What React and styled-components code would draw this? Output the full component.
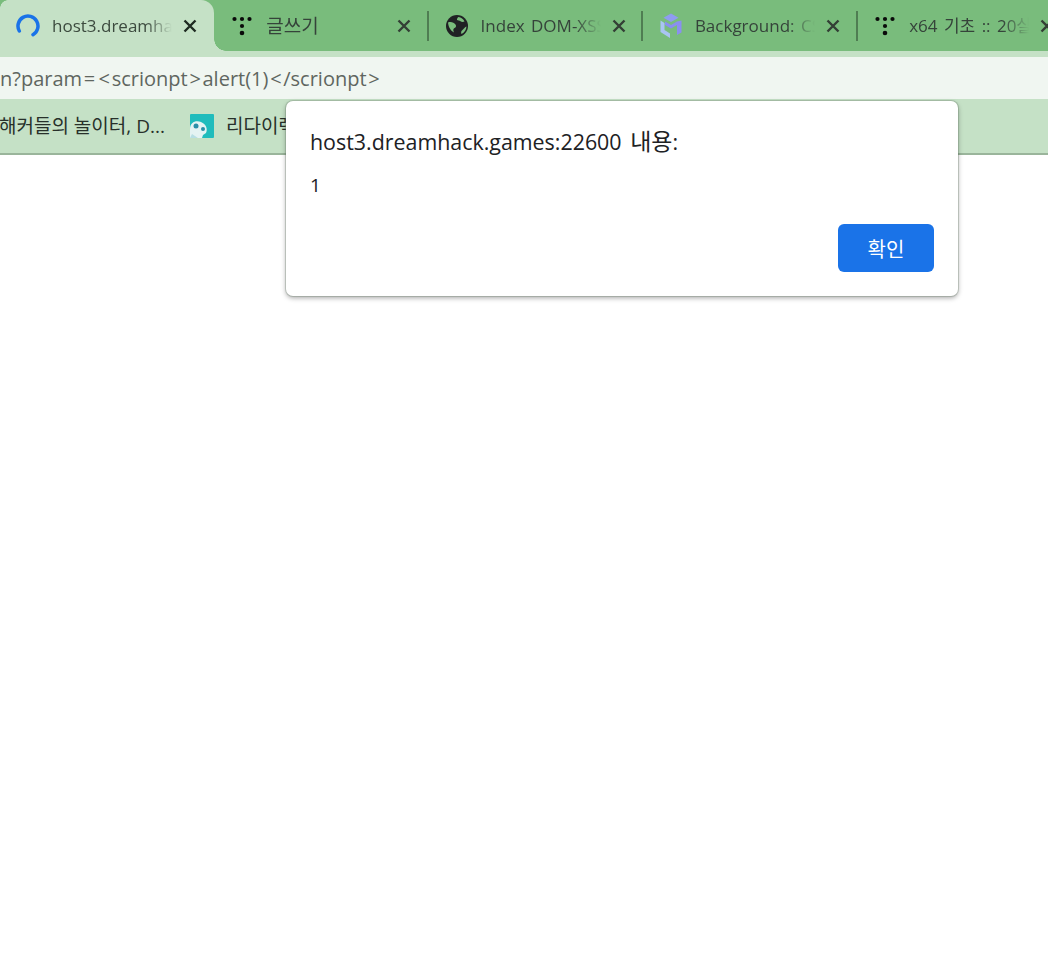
import React from "react"
import styled, { createGlobalStyle } from "styled-components"

const GlobalStyle = createGlobalStyle`
    html, body {
        margin: 0;
        padding: 0;
        background: #fff;
        overflow: hidden;
    }
    body {
        font-family: "Open Sans", "Noto Sans CJK KR", sans-serif;
    }
`;

const Page = styled.div`
    position: relative;
    width: 1048px;
    height: 964px;
    overflow: hidden;
    background: #fff;
`;

const TabStrip = styled.div`
    display: flex;
    height: 51px;
    background: #79bc7c;
`;

const Tab = styled.div`
    position: relative;
    flex: 0 0 214.3px;
    height: ${(p) => (p.$active ? "57px" : "51px")};
    display: flex;
    align-items: center;
    box-sizing: border-box;
    padding-bottom: ${(p) => (p.$active ? "6px" : "0")};
    background: ${(p) => (p.$active ? "#c5e1c6" : "transparent")};
    border-radius: ${(p) => (p.$active ? "0 13px 0 0" : "0")};
    color: ${(p) => (p.$active ? "#3c4a3e" : "#35433a")};
    z-index: ${(p) => (p.$active ? 1 : 0)};

    &::after {
        content: "";
        display: ${(p) => (p.$active ? "block" : "none")};
        position: absolute;
        left: 100%;
        bottom: 6px;
        width: 12px;
        height: 12px;
        background: radial-gradient(circle at 100% 0, transparent 11.5px, #c5e1c6 12px);
    }
`;

const Corner = styled.div`
    position: absolute;
    left: 0;
    top: 0;
    width: 8px;
    height: 8px;
    background: radial-gradient(circle at 100% 100%, transparent 7.5px, #79bc7c 8px);
`;

const Favicon = styled.div`
    flex: 0 0 24px;
    width: 24px;
    height: 24px;
    margin-left: 16px;
    display: flex;
    align-items: center;
    justify-content: center;
`;

const TabTitle = styled.div`
    flex: 0 0 120px;
    width: 120px;
    margin-left: 12px;
    font-size: ${(p) => p.$size || 17}px;
    line-height: 24px;
    word-spacing: 2px;
    white-space: nowrap;
    overflow: hidden;
    -webkit-mask-image: linear-gradient(to right, #000 78%, transparent 100%);
    mask-image: linear-gradient(to right, #000 78%, transparent 100%);
`;

const CloseButton = styled.div`
    flex: 0 0 14px;
    width: 14px;
    height: 14px;
    margin-left: 11px;
    display: flex;
    color: ${(p) => (p.$active ? "#1f2a22" : "#333f35")};
`;

const Separator = styled.div`
    position: absolute;
    right: -0.5px;
    top: 11px;
    width: 2px;
    height: 30px;
    background: #4f7d52;
`;

const Toolbar = styled.div`
    padding-top: 6px;
    background: #c5e1c6;
`;

const UrlBar = styled.div`
    height: 42px;
    display: flex;
    align-items: center;
    padding-top: 1px;
    box-sizing: border-box;
    background: #f0f6f1;
    font-size: 20px;
    color: #5f6660;
    white-space: pre;
`;

const UrlSymbol = styled.span`
    padding: 0 1.7px;
`;

const BookmarkBar = styled.div`
    height: 56px;
    display: flex;
    align-items: center;
    box-sizing: border-box;
    padding-bottom: 2px;
    background: #c5e1c6;
    border-bottom: 2px solid #9ab59b;
    font-size: 19px;
    color: #27302a;
    white-space: nowrap;
`;

const BookmarkText = styled.span`
    margin-left: ${(p) => p.$left}px;
`;

const BookmarkIcon = styled.div`
    width: 24px;
    height: 24px;
    margin: 2px 0 0 25px;
`;

const Dialog = styled.div`
    position: absolute;
    left: 286px;
    top: 101px;
    width: 672px;
    height: 195px;
    box-sizing: border-box;
    padding: 25px 24px 24px 24px;
    display: flex;
    flex-direction: column;
    background: #fff;
    border-radius: 7px;
    box-shadow: 0 0 0 1px rgba(110, 130, 110, 0.3), 0 2px 5px rgba(0, 0, 0, 0.35);
    color: #202124;
`;

const DialogTitle = styled.div`
    font-size: 21.4px;
    line-height: 30px;
    word-spacing: 3px;
`;

const DialogTitleHangul = styled.span`
    font-size: 23px;
`;

const DialogMessage = styled.div`
    margin-top: 15px;
    font-size: 19px;
    line-height: 26px;
`;

const DialogActions = styled.div`
    margin-top: auto;
    display: flex;
    justify-content: flex-end;
`;

const OkButton = styled.div`
    width: 96px;
    height: 48px;
    display: flex;
    align-items: center;
    justify-content: center;
    background: #1a73e8;
    border-radius: 6px;
    color: #fff;
    font-size: 20px;
`;

function Spinner() {
    return (
        <svg width="24" height="24" viewBox="0 0 24 24" fill="none">
            <path d="M3.3 17A10 10 0 1 1 17 20.7" stroke="#1a73e8" strokeWidth="3.5" strokeLinecap="round" />
        </svg>
    )
}

function DotsIcon() {
    return (
        <svg width="20" height="20" viewBox="0 0 20 20" fill="#0a0a0a">
            <circle cx="2.500" cy="3" r="2.100" />
            <circle cx="10" cy="3" r="2.100" />
            <circle cx="17.500" cy="3" r="2.100" />
            <circle cx="10" cy="10" r="2.100" />
            <circle cx="10" cy="17" r="2.300" />
        </svg>
    )
}

function GlobeIcon() {
    return (
        <svg width="22" height="22" viewBox="0 0 22 22">
            <circle cx="11" cy="11" r="11" fill="#202124" />
            <path d="M2 7.500C5 6.500 8 7.500 9.500 9.500c1 1.500.5 3-1 3.500-1.500.5-1.500 2.500-.5 4.500-3-1.500-5.500-5-6-10z" fill="#79bc7c" />
            <path d="M12.500 2c2.500.3 5 2 6 4.500-1.500.8-3 .5-4-.3-1-.8-2.500-.7-3.500-1.200-.3-1 .5-2.300 1.500-3z" fill="#79bc7c" />
            <path d="M20.500 11.500c-.3 3.500-2 6-5 7.500-.8-1.500-.3-3 1-4 1.300-1 2.500-3 4-3.500z" fill="#79bc7c" />
        </svg>
    )
}

function CubeIcon() {
    return (
        <svg width="24" height="26" viewBox="0 0 24 26" fill="none">
            <path d="M12 .5l7.500 4.300-7.500 4.200-7.500-4.200z" fill="#8f9cf0" />
            <path d="M1.500 7.500v11.500l9.500 6v-4.500L5.500 17V10z" fill="#a9c4f2" />
            <path d="M22.500 7.500v12l-4.500 2.500v-10l-6 3.500-6-3.500V8.500l6 3.500 6-3.500z" fill="#8a8ff0" />
        </svg>
    )
}

function SkullIcon() {
    return (
        <svg width="24" height="24" viewBox="0 0 24 24">
            <rect width="24" height="24" rx="1" fill="#20bcbc" />
            <path d="M0 15C0 8 6 6 11 8c5 2 7 7 5 11l-3 2-1 3H0z" fill="#e4f3f3" />
            <circle cx="6" cy="12" r="2.500" fill="#2a8fa8" />
            <circle cx="13" cy="15" r="2" fill="#2a8fa8" />
            <path d="M2 20l6 4h-8z" fill="#b8dfe4" />
        </svg>
    )
}

function CloseIcon() {
    return (
        <svg width="14" height="14" viewBox="0 0 14 14" stroke="currentColor" strokeWidth="2.400" strokeLinecap="butt">
            <path d="M1.500 1.500l11 11M12.500 1.500l-11 11" />
        </svg>
    )
}

const tabs = [
    { title: "host3.dreamhack.games", icon: <Spinner />, active: true },
    { title: "글쓰기", icon: <DotsIcon />, size: 19 },
    { title: "Index DOM-XSS", icon: <GlobeIcon /> },
    { title: "Background: CSS", icon: <CubeIcon /> },
    { title: "x64 기초 :: 20살", icon: <DotsIcon /> },
];

function App() {
    return (
        <Page>
            <GlobalStyle />
            <TabStrip>
                {tabs.map((tab, i) => (
                    <Tab key={i} $active={tab.active}>
                        {tab.active && <Corner />}
                        <Favicon>{tab.icon}</Favicon>
                        <TabTitle $size={tab.size}>{tab.title}</TabTitle>
                        <CloseButton $active={tab.active}><CloseIcon /></CloseButton>
                        {i > 0 && i < 4 && <Separator />}
                    </Tab>
                ))}
            </TabStrip>
            <Toolbar>
                <UrlBar>
                    n?param<UrlSymbol>=</UrlSymbol><UrlSymbol>&lt;</UrlSymbol>scrionpt<UrlSymbol>&gt;</UrlSymbol>alert(1)<UrlSymbol>&lt;</UrlSymbol>/scrionpt<UrlSymbol>&gt;</UrlSymbol>
                </UrlBar>
            </Toolbar>
            <BookmarkBar>
                <BookmarkText $left={-1}>해커들의 놀이터, D...</BookmarkText>
                <BookmarkIcon><SkullIcon /></BookmarkIcon>
                <BookmarkText $left={12}>리다이렉트</BookmarkText>
            </BookmarkBar>
            <Dialog>
                <DialogTitle>host3.dreamhack.games:22600 <DialogTitleHangul>내용</DialogTitleHangul>:</DialogTitle>
                <DialogMessage>1</DialogMessage>
                <DialogActions>
                    <OkButton>확인</OkButton>
                </DialogActions>
            </Dialog>
        </Page>
    )
}

export default App;
